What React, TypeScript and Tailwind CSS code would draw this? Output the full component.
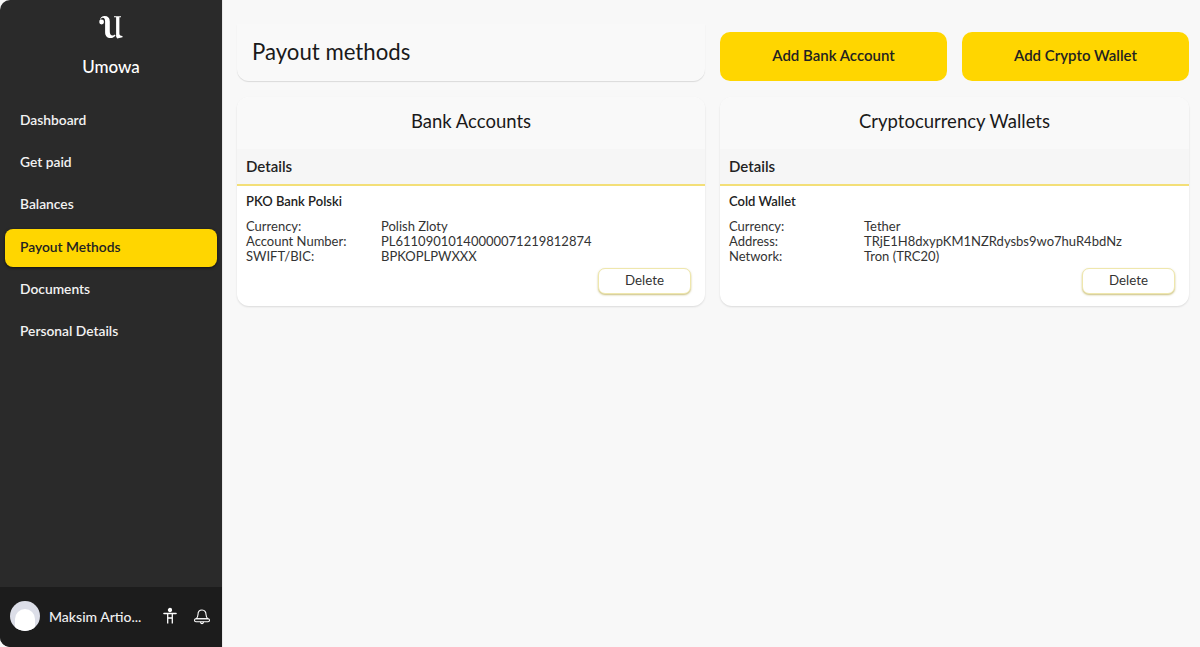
const navItems = [
  { label: "Dashboard", cls: "mt-[24px] text-[#f2f2f2]" },
  { label: "Get paid", cls: "mt-1 text-[#f2f2f2]" },
  { label: "Balances", cls: "mt-1 text-[#f2f2f2]" },
  { label: "Payout Methods", cls: "mt-[5px] bg-[#ffd600] text-[#222] shadow-[0_1px_3px_rgba(0,0,0,0.6)]" },
  { label: "Documents", cls: "mt-1 text-[#f2f2f2]" },
  { label: "Personal Details", cls: "mt-1 text-[#f2f2f2]" },
];

function Logo() {
  return (
    <svg width="24" height="24" viewBox="0 0 24 24" className="text-white" fill="currentColor">
      <circle cx="2.6" cy="7" r="2.4" />
      <path d="M.6 6.2C.9 2.8 3 1 5.6 1c3.4 0 5.2 1.9 5.2 5.4v10.2c0 2.6 1 3.9 2.8 3.9.9 0 1.7-.3 2.3-.9l.6.9c-1 1.5-2.7 2.6-5 2.6-3.4 0-5.4-2.3-5.4-5.8V6.2C6.100 3.900 5.300 2.700 3.800 2.700 2.500 2.700 1.600 3.600 1.200 5.500z" />
      <path d="M15 1.200h7v1.100h-1.600v16.300c0 1.500.7 2.300 3.100 2.500v1.100l-5.400 1.300-1-1.900V2.300H15z" />
    </svg>
  );
}

function AccessIcon() {
  return (
    <svg width="18" height="18" viewBox="0 0 18 18" fill="none" stroke="currentColor" strokeWidth="1.3" className="ml-[12px] text-white">
      <circle cx="9" cy="3" r="1.5" fill="currentColor" />
      <path d="M3 6.500h12" strokeWidth="1.600" strokeLinecap="round" />
      <path d="M6.700 6.500v10M11.300 6.500v10M6.700 11h4.600" />
    </svg>
  );
}

function BellIcon() {
  return (
    <svg width="18" height="18" viewBox="0 0 18 18" fill="none" stroke="currentColor" strokeWidth="1.1" className="mt-[2px] ml-[14px] text-white">
      <path d="M9 2C6.200 2 5 4 5 6.500c0 2-.8 3.300-2 4.300h12c-1.200-1-2-2.300-2-4.300C13 4 11.800 2 9 2z" strokeLinejoin="round" />
      <rect x="1.500" y="10.800" width="15" height="3" rx="1.500" />
      <path d="M7.500 13.800c.2 1.200.8 1.800 1.500 1.800s1.300-.6 1.500-1.800" />
    </svg>
  );
}

function Sidebar() {
  return (
    <aside className="flex h-[647px] w-[223px] shrink-0 flex-col overflow-hidden rounded-l-[10px] border-r border-[#e9e9e9] bg-[#2a2a2a]">
      <div className="flex flex-col items-center pt-[15px]">
        <Logo />
        <div className="mt-[17px] text-[17px] leading-[22px] font-medium text-white">Umowa</div>
      </div>
      <nav className="flex flex-1 flex-col px-[5px]">
        {navItems.map((item) => (
          <div
            key={item.label}
            className={`flex h-[38px] items-center rounded-[8px] pb-[2px] pl-[15px] text-[13.800px] font-semibold ${item.cls}`}
          >
            {item.label}
          </div>
        ))}
      </nav>
      <div className="flex h-[60px] items-center bg-[#1c1c1c] pb-[2px] pl-[10px]">
        <div className="flex h-[30px] w-[30px] items-end justify-center overflow-hidden rounded-full bg-[#dcdee8]">
          <div className="h-[22px] w-[20px] rounded-t-full bg-white" />
        </div>
        <div className="ml-[9px] w-[100px] text-[14px] font-medium whitespace-nowrap text-[#f0f0f0]">Maksim Artio...</div>
        <AccessIcon />
        <BellIcon />
      </div>
    </aside>
  );
}

function MethodCard({ title, name, rows }: { title: string; name: string; rows: [string, string][] }) {
  return (
    <section className="h-[209px] rounded-[12px] bg-white shadow-[0_1px_2px_rgba(0,0,0,0.12)]">
      <h2 className="flex h-[52px] items-center justify-center rounded-t-[12px] bg-[#f9f9f9] pb-[3px] text-[18.500px] text-[#1a1a1a]">
        {title}
      </h2>
      <div className="flex h-[37px] items-center border-b-2 border-[#f3df78] bg-[#f6f6f6] pl-[9px] text-[15px] font-semibold text-[#222]">
        Details
      </div>
      <div className="px-[9px] pt-[6px]">
        <div className="text-[13px] leading-[18px] font-semibold text-[#222]">{name}</div>
        <div className="mt-[9px] text-[13px] leading-[15px] text-[#333]">
          {rows.map(([label, value]) => (
            <div key={label} className="flex">
              <span className="w-[135px] shrink-0">{label}</span>
              <span>{value}</span>
            </div>
          ))}
        </div>
        <div className="mt-[4px] flex justify-end pr-[5px]">
          <button className="h-[26px] w-[93px] rounded-[7px] border border-[#efe7ad] bg-white text-[13.300px] text-[#333] shadow-[0_1px_2px_rgba(150,130,0,0.5)]">
            Delete
          </button>
        </div>
      </div>
    </section>
  );
}

export default function App() {
  return (
    <div className="flex h-[647px] w-[1200px] overflow-hidden bg-[#f8f8f8] font-['Lato',sans-serif]">
      <Sidebar />
      <main className="grid h-fit flex-1 grid-cols-[468px_469px] gap-x-[15px] gap-y-[16px] pt-[24px] pl-[14px]">
        <div className="flex h-[57px] items-center rounded-b-[12px] bg-[#f9f9f9] pb-[2px] pl-[15px] text-[22.200px] text-[#1a1a1a] shadow-[0_1px_1px_rgba(0,0,0,0.12)]">
          Payout methods
        </div>
        <div className="flex items-end gap-[15px]">
          <button className="h-[49px] flex-1 rounded-[10px] bg-[#ffd600] pb-[2px] text-[15px] font-semibold text-[#222]">
            Add Bank Account
          </button>
          <button className="h-[49px] flex-1 rounded-[10px] bg-[#ffd600] pb-[2px] text-[15px] font-semibold text-[#222]">
            Add Crypto Wallet
          </button>
        </div>
        <MethodCard
          title="Bank Accounts"
          name="PKO Bank Polski"
          rows={[
            ["Currency:", "Polish Zloty"],
            ["Account Number:", "PL61109010140000071219812874"],
            ["SWIFT/BIC:", "BPKOPLPWXXX"],
          ]}
        />
        <MethodCard
          title="Cryptocurrency Wallets"
          name="Cold Wallet"
          rows={[
            ["Currency:", "Tether"],
            ["Address:", "TRjE1H8dxypKM1NZRdysbs9wo7huR4bdNz"],
            ["Network:", "Tron (TRC20)"],
          ]}
        />
      </main>
    </div>
  );
}
